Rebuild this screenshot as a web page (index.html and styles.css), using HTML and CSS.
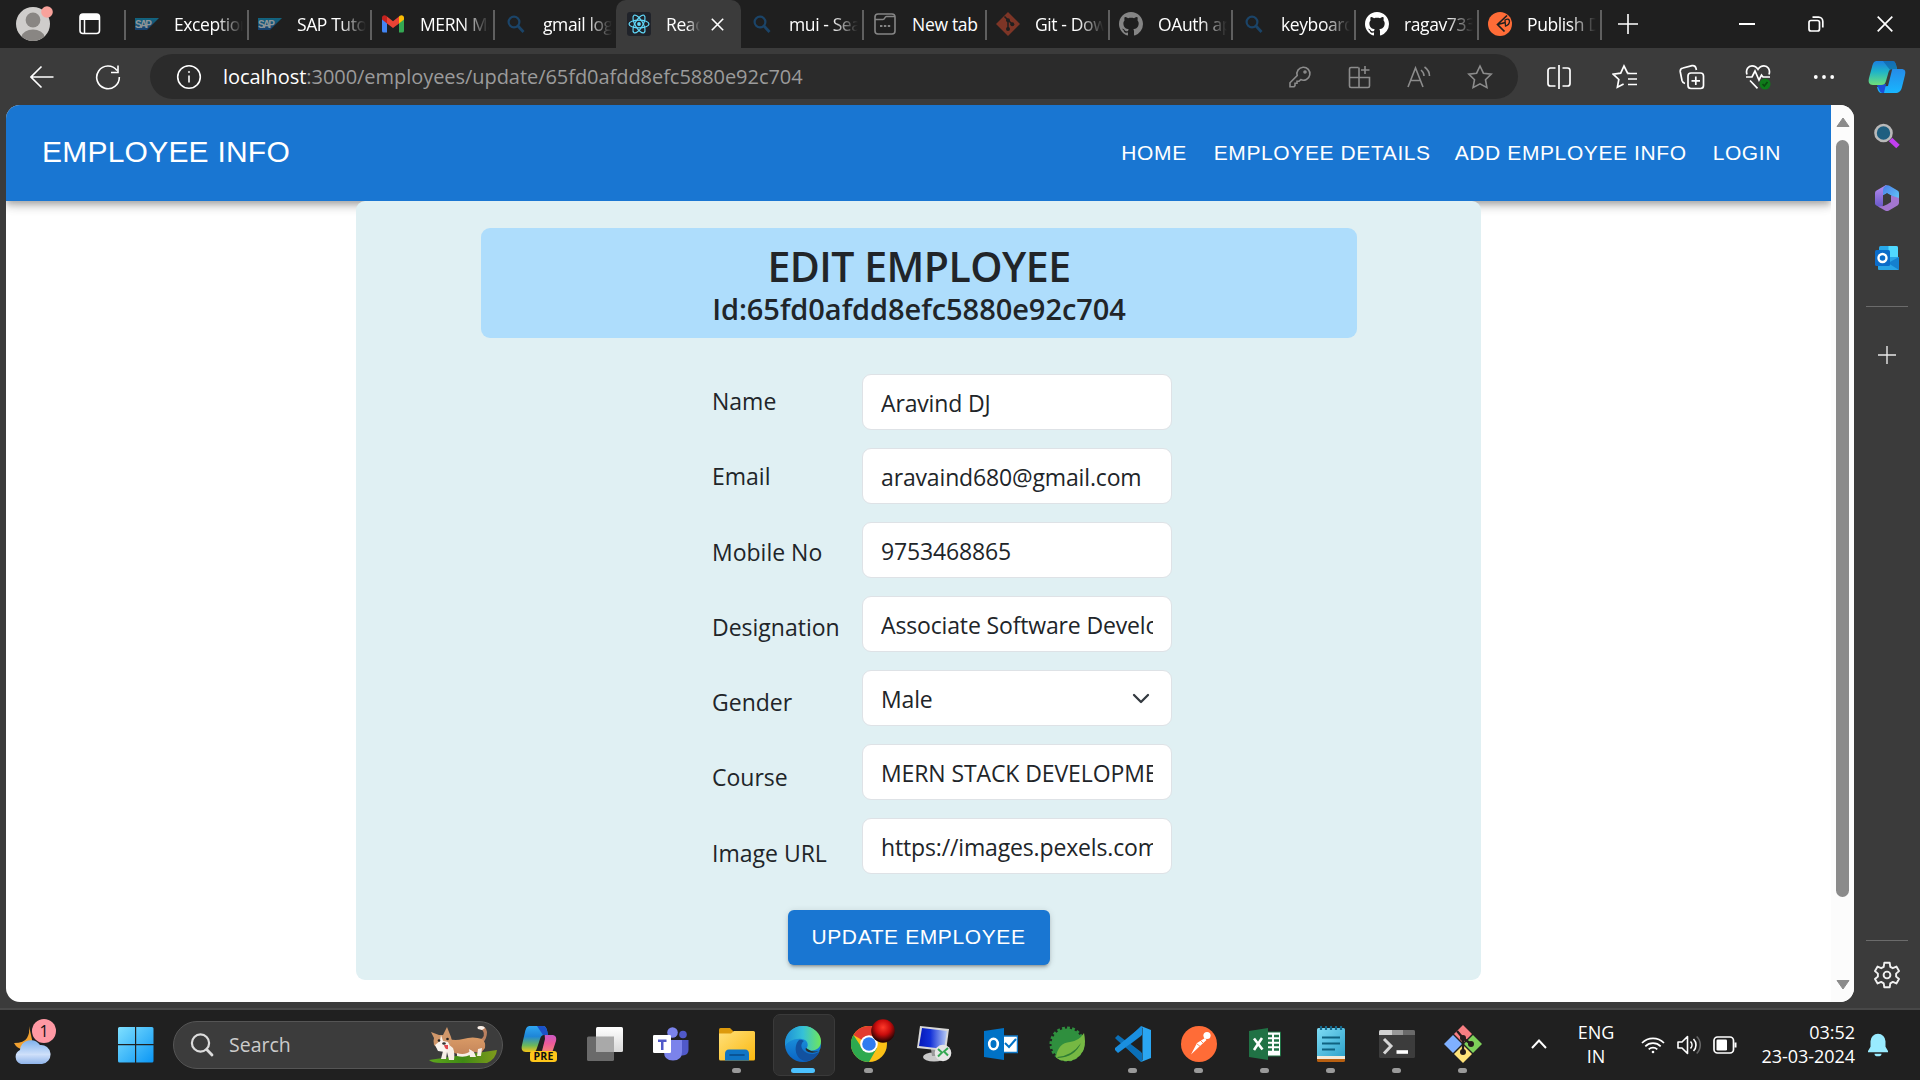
FILE: index.html
```html
<!DOCTYPE html>
<html lang="en">
<head>
<meta charset="utf-8">
<title>Employee Info</title>
<link rel="stylesheet" href="styles.css">
</head>
<body>
<svg class="defs" width="0" height="0" aria-hidden="true">
  <defs>
    <linearGradient id="gWin" x1="0" y1="0" x2="1" y2="1"><stop offset="0" stop-color="#7fe0ff"/><stop offset="1" stop-color="#0a96f5"/></linearGradient>
    <linearGradient id="gSap" x1="0" y1="0" x2="0" y2="1"><stop offset="0" stop-color="#12657f"/><stop offset="1" stop-color="#173f6e"/></linearGradient>
    <linearGradient id="gCopA" x1="0" y1="0" x2="0" y2="1"><stop offset="0" stop-color="#1b7fe0"/><stop offset=".45" stop-color="#1fb4c8"/><stop offset="1" stop-color="#6fe07a"/></linearGradient>
    <linearGradient id="gCopB" x1="0" y1="0" x2="0" y2="1"><stop offset="0" stop-color="#2a7de0"/><stop offset="1" stop-color="#18b6ff"/></linearGradient>
    <linearGradient id="gPreA" x1="0" y1="0" x2="0" y2="1"><stop offset="0" stop-color="#2fa6f2"/><stop offset=".4" stop-color="#1e86d8"/><stop offset=".75" stop-color="#6cb85a"/><stop offset="1" stop-color="#f7c515"/></linearGradient>
    <linearGradient id="gPreB" x1="0" y1="0" x2="0" y2="1"><stop offset="0" stop-color="#a358f0"/><stop offset=".6" stop-color="#ee5a9a"/><stop offset="1" stop-color="#f8946a"/></linearGradient>
    <linearGradient id="gCloud" x1="0" y1="0" x2="0" y2="1"><stop offset="0" stop-color="#7fb2ee"/><stop offset=".6" stop-color="#cfe0fa"/><stop offset="1" stop-color="#8fb4ea"/></linearGradient>
    <linearGradient id="gFold" x1="0" y1="0" x2="1" y2="1"><stop offset="0" stop-color="#ffe07a"/><stop offset="1" stop-color="#fbb80f"/></linearGradient>
    <linearGradient id="gEdgeA" x1="0" y1="0" x2="1" y2="0"><stop offset="0" stop-color="#1d8fd6"/><stop offset=".5" stop-color="#35c1d8"/><stop offset="1" stop-color="#6fe65a"/></linearGradient>
    <linearGradient id="gEdgeB" x1="0" y1="0" x2="0" y2="1"><stop offset="0" stop-color="#22a4e4"/><stop offset="1" stop-color="#0a63c4"/></linearGradient>
    <linearGradient id="gView" x1="0" y1="0" x2="0" y2="1"><stop offset="0" stop-color="#ffffff"/><stop offset="1" stop-color="#d8d8d8"/></linearGradient>
    <linearGradient id="gNote" x1="0" y1="0" x2="1" y2="1"><stop offset="0" stop-color="#7edcf5"/><stop offset="1" stop-color="#2fa3cb"/></linearGradient>
    <linearGradient id="gRdp" x1="0" y1="0" x2="1" y2="0"><stop offset="0" stop-color="#0518b8"/><stop offset=".4" stop-color="#1230d8"/><stop offset="1" stop-color="#b8ccf4"/></linearGradient>
    <linearGradient id="gM1" x1="0" y1="0" x2="1" y2="1"><stop offset="0" stop-color="#4a7fe8"/><stop offset="1" stop-color="#62c8f8"/></linearGradient>
    <linearGradient id="gM2" x1="0" y1="0" x2="0" y2="1"><stop offset="0" stop-color="#b78cf0"/><stop offset="1" stop-color="#6858c8"/></linearGradient>
    <radialGradient id="gBall" cx=".5" cy=".35" r=".7"><stop offset="0" stop-color="#ff3a2a"/><stop offset=".45" stop-color="#c80c0c"/><stop offset=".85" stop-color="#2a0404"/></radialGradient>
    <linearGradient id="gGrass" x1="0" y1="0" x2="1" y2="0"><stop offset="0" stop-color="#5fa81e"/><stop offset=".5" stop-color="#3f8a14"/><stop offset="1" stop-color="#7f9a1c"/></linearGradient>
    <linearGradient id="gDog" x1="0" y1="0" x2="0" y2="1"><stop offset="0" stop-color="#d99a66"/><stop offset="1" stop-color="#c4855a"/></linearGradient>
    <symbol id="sap" viewBox="0 0 24 12"><path d="M0 0h24L12 12H0z" fill="url(#gSap)"/><text x="0" y="9.6" class="sap-text" textLength="17">SAP</text></symbol>
    <symbol id="lens" viewBox="0 0 24 24"><g fill="none" stroke="#1b4468" stroke-width="2.2"><circle cx="10" cy="10" r="5.4"/><path d="M14 14l5.5 6" stroke-width="2.8"/></g></symbol>
    <symbol id="github" viewBox="0 0 16 16"><path fill="currentColor" d="M8 0C3.58 0 0 3.58 0 8c0 3.54 2.29 6.53 5.47 7.59.4.07.55-.17.55-.38 0-.19-.01-.82-.01-1.49-2.01.37-2.53-.49-2.69-.94-.09-.23-.48-.94-.82-1.13-.28-.15-.68-.52-.01-.53.63-.01 1.08.58 1.23.82.72 1.21 1.87.87 2.33.66.07-.52.28-.87.51-1.07-1.78-.2-3.64-.89-3.64-3.95 0-.87.31-1.59.82-2.15-.08-.2-.36-1.02.08-2.12 0 0 .67-.21 2.2.82.64-.18 1.32-.27 2-.27s1.36.09 2 .27c1.53-1.04 2.2-.82 2.2-.82.44 1.1.16 1.92.08 2.12.51.56.82 1.27.82 2.15 0 3.07-1.87 3.75-3.65 3.95.29.25.54.73.54 1.48 0 1.07-.01 1.93-.01 2.2 0 .21.15.46.55.38A8.01 8.01 0 0 0 16 8c0-4.42-3.58-8-8-8z"/></symbol>
  </defs>
</svg>

<header class="tabstrip">
  <div class="strip-start">
    <svg class="avatar" width="38" height="44" viewBox="0 0 38 44"><circle cx="18" cy="24" r="17" fill="#cfcdcb"/><circle cx="18" cy="20" r="7.4" fill="#898683"/><path d="M6.5 36.5a11.6 8 0 0 1 23 0A17 17 0 0 1 6.500 36.500z" fill="#898683"/><circle cx="32" cy="12" r="5.8" fill="#f8a29b"/></svg>
    <svg width="24" height="24" viewBox="0 0 24 24"><rect x="2" y="2" width="19.500" height="19.500" rx="3" fill="none" stroke="#fff" stroke-width="1.600"/><path d="M2 5a3 3 0 0 1 3-3h13.500a3 3 0 0 1 3 3v3H2z" fill="#fff"/><path d="M6.500 8v13" stroke="#fff" stroke-width="1.500"/></svg>
  </div>
  <div class="tab"><svg class="fav" width="24" height="12"><use href="#sap"/></svg><span class="tab-title">Exceptional</span></div>
  <div class="tab"><svg class="fav" width="24" height="12"><use href="#sap"/></svg><span class="tab-title">SAP Tutorial</span></div>
  <div class="tab"><svg class="fav" width="24" height="18" viewBox="0 0 24 18"><path d="M1 2.500V16a1.600 1.600 0 0 0 1.600 1.600H6V8z" fill="#4285f4"/><path d="M23 2.500V16a1.600 1.600 0 0 1-1.600 1.600H18V8z" fill="#34a853"/><path d="M18 1.600V8.500l5-4V2.600C23 .3 20.400-.6 18.800.8z" fill="#fbbc04"/><path d="M6 8.500V1.500l6 4.700 6-4.700v7L12 13z" fill="#ea4335"/><path d="M1 2.600V4.500l5 4V1.500L5.200.8C3.600-.6 1 .3 1 2.600z" fill="#c5221f"/></svg><span class="tab-title">MERN Mail</span></div>
  <div class="tab"><svg class="fav" width="24" height="24"><use href="#lens"/></svg><span class="tab-title">gmail login</span></div>
  <div class="tab active"><svg class="fav" width="24" height="24" viewBox="0 0 24 24"><rect width="24" height="24" rx="3" fill="#20232a"/><g fill="none" stroke="#61dafb" stroke-width="1.200"><ellipse cx="12" cy="12" rx="10" ry="3.900"/><ellipse cx="12" cy="12" rx="10" ry="3.900" transform="rotate(60 12 12)"/><ellipse cx="12" cy="12" rx="10" ry="3.900" transform="rotate(120 12 12)"/></g><circle cx="12" cy="12" r="1.900" fill="#61dafb"/></svg><span class="tab-title">React App</span><svg class="tab-close" width="13" height="13" viewBox="0 0 13 13"><path d="M.8.8l11.400 11.400M12.200.8L.8 12.200" stroke="#fff" stroke-width="1.600"/></svg></div>
  <div class="tab bare"><svg class="fav" width="24" height="24"><use href="#lens"/></svg><span class="tab-title">mui - Search</span></div>
  <div class="tab"><svg class="fav" width="24" height="24" viewBox="0 0 24 24" fill="none" stroke="#858585" stroke-width="1.600"><rect x="2" y="2" width="20" height="20" rx="3"/><path d="M2 7.500h8c2 0 1.500-3 3.500-3H22"/><path d="M7 14h2.400M10.900 14h2.400M14.800 14h2.400" stroke-width="2.200"/></svg><span class="tab-title whole">New tab</span></div>
  <div class="tab"><svg class="fav" width="24" height="24" viewBox="0 0 24 24"><path d="M12 0L24 12 12 24 0 12z" fill="#7d3526"/><path d="M8.500 4.500L12 8v9M12 8l4.300 4.300" stroke="#1f1f1f" stroke-width="1.500" fill="none"/><g fill="#1f1f1f"><circle cx="12" cy="8.200" r="2"/><circle cx="12" cy="17" r="2"/><circle cx="16.300" cy="12.300" r="2"/></g></svg><span class="tab-title">Git - Downloads</span></div>
  <div class="tab dim"><svg class="fav" width="24" height="24"><use href="#github"/></svg><span class="tab-title">OAuth apps</span></div>
  <div class="tab"><svg class="fav" width="24" height="24"><use href="#lens"/></svg><span class="tab-title">keyboards</span></div>
  <div class="tab"><svg class="fav" width="24" height="24"><use href="#github"/></svg><span class="tab-title">ragav7338</span></div>
  <div class="tab"><svg class="fav" width="24" height="24" viewBox="0 0 24 24"><circle cx="12" cy="12" r="12" fill="#ff6c37"/><path d="M19 3.500L9.500 12.500l7 7M9.500 12.500l8-2" stroke="#1f1f1f" stroke-width="1.700" fill="none"/><path d="M17 8q4-2 4.500 1 0 4-4 5z" fill="#ff6c37" stroke="#1f1f1f" stroke-width="1.300"/></svg><span class="tab-title">Publish Docs</span></div>
  <div class="newtab"><svg width="22" height="22" viewBox="0 0 22 22"><path d="M11 1v20M1 11h20" stroke="#fff" stroke-width="1.600"/></svg></div>
  <div class="winctl">
    <svg width="16" height="16" viewBox="0 0 16 16"><path d="M0 8h16" stroke="#fff" stroke-width="2"/></svg>
    <svg width="16" height="16" viewBox="0 0 16 16" fill="none" stroke="#fff" stroke-width="1.700"><rect x="1" y="4.500" width="10.500" height="10.500" rx="2"/><path d="M4.500 1.200h6a4.300 4.300 0 0 1 4.300 4.300v6"/></svg>
    <svg width="16" height="16" viewBox="0 0 16 16"><path d="M.7.7l14.600 14.600M15.300.7L.7 15.300" stroke="#fff" stroke-width="1.700"/></svg>
  </div>
</header>

<div class="toolbar">
  <svg class="tb-back" width="24" height="24" viewBox="0 0 24 24" fill="none" stroke="#fff" stroke-width="1.600"><path d="M23.500 12H1M11.500 1.500L1 12l10.500 10.500"/></svg>
  <svg class="tb-reload" width="26" height="26" viewBox="0 0 26 26" fill="none" stroke="#fff" stroke-width="1.600"><path d="M22 6.500A11.300 11.300 0 1 0 24.300 13M23 1.500v7h-7"/></svg>
  <div class="omnibox">
    <svg class="ob-info" width="26" height="26" viewBox="0 0 26 26" fill="none" stroke="#fff" stroke-width="1.600"><circle cx="13" cy="13" r="11.300"/><path d="M13 11.500v7"/><circle cx="13" cy="8" r=".7" fill="#fff" stroke-width=".6"/></svg>
    <span class="url"><b>localhost</b>:3000/employees/update/65fd0afdd8efc5880e92c704</span>
    <div class="ob-icons">
      <svg width="24" height="24" viewBox="0 0 24 24"><path d="M15 2.200a6.500 6.500 0 1 1-2.300 12.400L11 16.300H9v2H7v2.300l-1 1.200H2v-4l7.200-7.200A6.500 6.500 0 0 1 15 2.200z"/><circle cx="17" cy="7" r="1"/></svg>
      <svg width="24" height="24" viewBox="0 0 24 24"><path d="M11.500 2.500H4a1.500 1.500 0 0 0-1.500 1.500v17A1.500 1.500 0 0 0 4 22.500h17a1.500 1.500 0 0 0 1.500-1.500v-8.500h-20M12 2.500v20M18 1v8M14 5h8.500"/></svg>
      <svg width="26" height="24" viewBox="0 0 26 24"><path d="M2 22L9.500 3 17 22M4.500 15.500h10M15 5q3 2.500 3 6M18.500 2q5 3.500 5 9"/></svg>
      <svg width="26" height="26" viewBox="0 0 26 26"><path d="M13 2l3.400 7.200 7.800 1-5.700 5.500 1.400 7.900L13 19.800l-6.900 3.800 1.400-7.900L1.800 10.200l7.800-1z"/></svg>
    </div>
  </div>
  <div class="tb-icons">
    <svg width="26" height="26" viewBox="0 0 26 26"><path d="M9.500 4H4.500A2.500 2.500 0 0 0 2 6.500v13A2.500 2.500 0 0 0 4.500 22h5M16.500 4h5A2.500 2.500 0 0 1 24 6.500v13a2.500 2.500 0 0 1-2.500 2.500h-5M13 1v24"/></svg>
    <svg width="26" height="26" viewBox="0 0 26 26"><path d="M18 9.500L15.500 9 12 2 8.700 9.200 1.200 10.200l5.600 5.300-1.400 7.700 6.200-3.300M15 9.500h10M16 15h9M16 20.500h9"/></svg>
    <svg width="26" height="26" viewBox="0 0 26 26"><rect x="9" y="9" width="15.500" height="15.500" rx="3"/><path d="M16.800 12.500v8.500M12.500 16.800H21M6 19.500a4 4 0 0 1-3-3L1.300 8A3.500 3.500 0 0 1 4 4l9-2.300a3.500 3.500 0 0 1 4 2.500l.4 1.800"/></svg>
    <svg width="26" height="26" viewBox="0 0 26 26"><path d="M2 10.500C.3 5.500 3.500 1.800 7 1.800c2.600 0 4.600 1.200 6 3.600 1.400-2.400 3.400-3.600 6-3.600 3.500 0 6.700 3.700 5 8.700M1 13h6l3-6 4 9 2.500-5 1.500 2h7M5 16.500l7.500 7.800"/><circle cx="20" cy="20" r="5.500" fill="#0f7b1a" stroke="none"/><path d="M17.500 20l1.800 2 3.200-4" stroke="#0a4a10"/></svg>
    <svg width="26" height="26" viewBox="0 0 26 26"><g fill="#fff" stroke="none"><circle cx="4.800" cy="13" r="1.900"/><circle cx="13" cy="13" r="1.900"/><circle cx="21.200" cy="13" r="1.900"/></g></svg>
  </div>
  <svg class="tb-copilot" width="38" height="34" viewBox="0 0 38 34"><path d="M26 1l3 8h4c4 0 5 2 4 6l-3 12c-1 4-3 6-7 6H14c-3 0-4-2-5-6l11-1 4-16z" fill="url(#gCopB)"/><path d="M9 25l9-1-2 9c-3 .5-4-1-5-4z" fill="#1c4fd6"/><path d="M9 1h15c3 0 4 2 5 8h-4c-3 0-4 1-5 5l-2 7c-1 3-2 4-5 4H5c-4 0-5-3-4-7L4 7c1-4 2-6 5-6z" fill="url(#gCopA)"/><path d="M15 1h9c3 0 4 2 5 8h-4l-3 1z" fill="#0d5f9d" opacity=".6"/></svg>
</div>

<div class="workspace">
  <div class="viewport">
    <div class="page">
      <nav class="appbar">
        <span class="brand">EMPLOYEE INFO</span>
        <div class="links"><a>HOME</a><a>EMPLOYEE DETAILS</a><a>ADD EMPLOYEE INFO</a><a>LOGIN</a></div>
      </nav>
      <main class="card">
        <div class="banner"><h1>EDIT EMPLOYEE</h1><h2>Id:65fd0afdd8efc5880e92c704</h2></div>
        <form class="form">
          <div class="labels"><label>Name</label><label>Email</label><label>Mobile No</label><label>Designation</label><label>Gender</label><label>Course</label><label>Image URL</label></div>
          <div class="fields">
            <div class="field"><span>Aravind DJ</span></div>
            <div class="field"><span>aravaind680@gmail.com</span></div>
            <div class="field"><span>9753468865</span></div>
            <div class="field"><span>Associate Software Developer</span></div>
            <div class="field select"><span>Male</span><svg width="18" height="11" viewBox="0 0 18 11"><path d="M2 2l7 7 7-7" fill="none" stroke="#343a40" stroke-width="2.300" stroke-linecap="round" stroke-linejoin="round"/></svg></div>
            <div class="field caps"><span>MERN STACK DEVELOPMENT</span></div>
            <div class="field"><span>https://images.pexels.com/photos</span></div>
          </div>
        </form>
        <button class="submit">UPDATE EMPLOYEE</button>
      </main>
    </div>
    <div class="scrollbar">
      <svg width="14" height="11" viewBox="0 0 14 11"><path d="M7 1l6 8.500H1z" fill="#8b8b8b" stroke="#8b8b8b" stroke-linejoin="round"/></svg>
      <div class="thumb"></div>
      <svg class="down" width="14" height="11" viewBox="0 0 14 11"><path d="M7 10L1 1.500h12z" fill="#8b8b8b" stroke="#8b8b8b" stroke-linejoin="round"/></svg>
    </div>
  </div>
  <aside class="sidebar">
    <svg width="26" height="26" viewBox="0 0 26 26"><path d="M16.500 16.500l7.500 7" stroke="#c23ff0" stroke-width="5"/><circle cx="9.500" cy="10" r="8" fill="#1f5f80" stroke="#b9b9b9" stroke-width="2.600"/></svg>
    <svg width="26" height="28" viewBox="0 0 26 28"><path d="M12 1L2.500 6.500Q1 7.400 1 9v10.500q0 1.200 1 1.800l3 1.700q4 1 4-3V11l9-5z" fill="url(#gM2)"/><path d="M11 2q2-1.500 4-.4L23.500 6.500Q25 7.400 25 9v7l-8-4.500-4-2.300-4 2.300V6q0-2.500 2-4z" fill="url(#gM1)"/><path d="M25 14v5q0 1.500-1.500 2.400L15 26.500q-2 1.100-4 0L4 22.500q5 .5 9-2l4-2.500v-6.500z" fill="#a376d0"/><path d="M13 9.200l4 2.300v5L13 19l-4-2.500v-5z" fill="#3b3b3b"/></svg>
    <svg width="26" height="26" viewBox="0 0 26 26"><rect x="5" y="1" width="19" height="17" rx="1.500" fill="#28a8ea"/><path d="M14.500 1H22q2 0 2 2v9h-9.500z" fill="#50d9ff"/><path d="M4 13l21-1v12q0 1-1 1H5q-1 0-1-1z" fill="#28a4e6"/><path d="M25 12v13L14 18z" fill="#1480cf"/><rect x="1" y="5" width="15" height="16" rx="1.500" fill="#0b6cc9"/><circle cx="8.500" cy="13" r="4" fill="none" stroke="#fff" stroke-width="2.400"/></svg>
    <hr>
    <svg class="add" width="20" height="20" viewBox="0 0 20 20"><path d="M10 1v18M1 10h18" stroke="#e8e8e8" stroke-width="1.400"/></svg>
    <hr class="low">
    <svg class="gear" width="26" height="28" viewBox="0 0 26 28" fill="none" stroke="#f0f0f0" stroke-width="1.900" stroke-linejoin="round"><path d="M10.300 1.800h5.400l.6 4 2.500 1.400 3.600-1.600 2.600 4.500-2.900 2.500v2.900l2.900 2.400-2.600 4.500-3.600-1.500-2.500 1.400-.6 4h-5.400l-.6-4-2.500-1.400-3.600 1.500L1 17.900l2.900-2.400v-2.900L1 10.100l2.600-4.500 3.600 1.600 2.500-1.400z"/><circle cx="13" cy="14" r="3.400"/></svg>
  </aside>
</div>

<footer class="taskbar">
  <div class="weather">
    <svg width="38" height="46" viewBox="0 0 38 46"><path d="M16 4q1 7-2 12t-13 5q3 6 9 6t10-5z" fill="#f0a030"/><path d="M8 42a7.500 7.500 0 0 1-1-14 11 11 0 0 1 20-5 9.500 9.500 0 0 1 2 19z" fill="url(#gCloud)"/></svg>
    <span class="badge">1</span>
  </div>
  <svg class="start" width="36" height="36" viewBox="0 0 36 36"><path d="M0 1.500Q0 0 1.500 0H17v17H0zM18.200 0h15.800Q35.500 0 35.500 1.500V17H18.200zM0 18.200h17V35.500H1.500Q0 35.500 0 34zM18.200 18.200h17.300V34q0 1.500-1.500 1.500H18.200z" fill="url(#gWin)"/></svg>
  <div class="search">
    <svg width="24" height="24" viewBox="0 0 24 24" fill="none" stroke="#dcdcdc"><circle cx="10.500" cy="10" r="8.600" stroke-width="2.200"/><path d="M16.700 16.500l5.300 5.500" stroke-width="2.800" stroke-linecap="round"/></svg>
    <span>Search</span>
    <svg class="dog" width="70" height="40" viewBox="0 0 70 40"><path d="M0 35L68 25q-1 9-10 13H12Q3 38 0 35z" fill="url(#gGrass)"/><path d="M51 15q6-4 3-9-2-3-5-2-1-3 3-3 5 0 6 6 0 6-4 11z" fill="#bb8060"/><path d="M49 4q-2-3 3-3 3 0 4 2l-3 2z" fill="#f8f0ea"/><path d="M20 14q6 2 14 0 10-3 19 0 4 3 3 9l-4 5-7-1q-8 4-17 2l-9-4z" fill="url(#gDog)"/><path d="M14 21q6-3 10 2 2 5 1 12h-5l-2-8-1 7h-5l2-8zM28 28q8 3 15-3l-2 5q-6 3-13 1zM40 24l5 3 2 5h-6zM49 24l4-1-1 8h-4z" fill="#f6eee6"/><path d="M2 7l8 3h4l4-8 4 10q2 5-2 10l-8 4-7-6q-1-4 0-7z" fill="#d0976a"/><path d="M12 10l2 6 5 1 2 4-5 6-7-1-3-6 5-4z" fill="#fbf5ef"/><path d="M15 20h4v4q-3 1-4-4z" fill="#e0484e"/><circle cx="10" cy="15.500" r="1.300" fill="#222"/><circle cx="18.500" cy="14" r="1.300" fill="#222"/><ellipse cx="15" cy="18.500" rx="1.800" ry="1.300" fill="#333"/></svg>
  </div>
  <div class="apps">
    <div class="app"><svg width="38" height="38" viewBox="0 0 38 38"><path d="M24 1l2 9h6c3 0 5 2 4 6l-3 9c-1 4-3 5-6 5H14l8-4 3-12z" fill="url(#gPreB)"/><path d="M10 1h13c3 0 4 3 5 9h-4c-2 0-3 1-4 4l-3 9c-1 3-2 4-5 4H6c-4 0-5-3-4-7L5 7c1-4 2-6 5-6z" fill="url(#gPreA)"/><path d="M17 1h6c3 0 4 3 5 9h-5z" fill="#1b52c8"/></svg><span class="pre">PRE</span></div>
    <div class="app"><svg width="36" height="36" viewBox="0 0 36 36"><rect x="0" y="10.500" width="27" height="24.500" rx="1.500" fill="#6a6a6a"/><rect x="9" y="1" width="27" height="25" rx="1.500" fill="url(#gView)"/><path d="M9 10.500h18V26H9z" fill="#a9a9a9"/></svg></div>
    <div class="app"><svg width="36" height="34" viewBox="0 0 36 34"><circle cx="30" cy="7.500" r="3.800" fill="#5059c9"/><circle cx="19.500" cy="5.500" r="5.300" fill="#7b83eb"/><path d="M24 13h11.500v10q0 5-6 5.500h-4z" fill="#5059c9"/><path d="M11 13h18v12q0 8.500-9 8.500T11 25z" fill="#7b83eb"/><rect x="0" y="8" width="18" height="18" rx="1.300" fill="#fff"/><path d="M5 12.500h8.500v2.400h-3V23H8v-8.100H5z" fill="#5059c9"/></svg></div>
    <div class="app run"><svg width="36" height="34" viewBox="0 0 36 34"><path d="M0 2.500Q0 1 1.500 1H11l4 4v4H0z" fill="#dd9a0c"/><path d="M0 6.500h12l3-2.500h19.500Q36 4 36 5.500V32q0 1.500-1.500 1.500h-33Q0 33.500 0 32z" fill="url(#gFold)"/><path d="M6 33.500V27q0-4.500 4-4.500h16q4 0 4 4.500v6.500z" fill="#0f75c5"/><path d="M11 28h14" stroke="#084a86" stroke-width="1.600" stroke-linecap="round"/></svg></div>
    <div class="app run current"><svg width="36" height="36" viewBox="0 0 36 36"><circle cx="18" cy="18" r="18" fill="url(#gEdgeB)"/><path d="M0 16C1 6 9 0 18 0c11 0 18 8 18 15 0 6-4 9.500-9 9.500-4 0-6-1.500-5-3 1.500-2 1-8-5-8.500C10 12 3 15 0 20z" fill="url(#gEdgeA)"/><path d="M14 14c-6 6-4 20 7 21 6 0 11-4 13-9-5 3-12 3-16-2-2.500-3-2-7 1-9-2-1.500-4-1.500-5-1z" fill="#12519f"/><path d="M21 22c-2 3 5 7 13 3l2.500-3V24q-8 4-15.500-2z" fill="#2b2b2b"/></svg></div>
    <div class="app run"><svg width="36" height="36" viewBox="0 0 36 36"><circle cx="18" cy="18" r="18" fill="#fbc016"/><path d="M18 18L2.400 9A18 18 0 0 1 33.600 9z" fill="#e33b2e"/><path d="M2.400 9A18 18 0 0 0 18 36l8-14-15 0z" fill="#2da94f"/><circle cx="18" cy="18" r="8.800" fill="#fff"/><circle cx="18" cy="18" r="6.800" fill="#2f7cf0"/></svg><svg class="ball" width="24" height="24"><circle cx="12" cy="12" r="11.800" fill="url(#gBall)"/></svg></div>
    <div class="app"><svg width="36" height="36" viewBox="0 0 36 36"><ellipse cx="17" cy="31" rx="11" ry="4.500" fill="#c9c9c9"/><path d="M14 23h9l1 7h-9z" fill="#999"/><path d="M3 0l29 3-3 22L0 22z" fill="#d8d8d8"/><path d="M5 2l25 3-3 18L2 20z" fill="url(#gRdp)"/><circle cx="26" cy="27" r="8.300" fill="#e6e6e6"/><path d="M21 23l4 3.500-4 4M31 22l-4 3.500 4 4" stroke="#35a853" stroke-width="2" fill="none"/></svg></div>
    <div class="app"><svg width="34" height="32" viewBox="0 0 34 32"><path d="M18 8h15.500v16.500H18z" fill="#fff" stroke="#0f78c8" stroke-width="1.500"/><path d="M21 15l4 4 7-8" fill="none" stroke="#0072c6" stroke-width="2"/><path d="M0 3L20 0v32L0 29z" fill="#0072c6"/><ellipse cx="9.500" cy="16" rx="4.300" ry="5.200" fill="none" stroke="#fff" stroke-width="2.600"/></svg></div>
    <div class="app"><svg width="38" height="38" viewBox="0 0 38 38"><circle cx="19" cy="19" r="15.500" fill="#2f8f3e"/><circle cx="19" cy="19" r="16" fill="none" stroke="#2f8f3e" stroke-width="3" stroke-dasharray="2.800 2.200"/><path d="M36 8q3 14-3 21-6 8-16 7-7-1-9-4 2-14 14-15 9-1 14-9z" fill="#76b843"/><path d="M9 32q15-1 24-14-6 14-23 15z" fill="#2f7d34"/></svg></div>
    <div class="app run"><svg width="36" height="36" viewBox="0 0 36 36"><path d="M26 0v36L8 18z" fill="#0f86d2"/><path d="M0 12l3-3L27 27v9L2 14z" fill="#0a6fb8"/><path d="M0 24l3 3L27 9V0L0 22z" fill="#1a8fe0"/><path d="M26 0l10 4v28l-10 4 1.500-2V2z" fill="#2aa6f2"/><path d="M26 10v16L15.500 18z" fill="#202020"/></svg></div>
    <div class="app run"><svg width="36" height="36" viewBox="0 0 36 36"><circle cx="18" cy="18" r="18" fill="#ff6c37"/><circle cx="26" cy="9.500" r="3.600" fill="#fff"/><path d="M16 17l8-5 1.500 2L19 20l-9 8.500z" fill="#fff"/><path d="M16 18l4 3M19 14l4 4" stroke="#ff6c37" stroke-width=".8"/></svg></div>
    <div class="app run"><svg width="32" height="32" viewBox="0 0 32 32"><path d="M17 4h14.500v24H17z" fill="#fff" stroke="#207245"/><path d="M19 8h4M25 8h5M19 12.500h4M25 12.500h5M19 17h4M25 17h5M19 21.500h4M25 21.500h5" stroke="#207245" stroke-width="2.400"/><path d="M0 3l19-3v32L0 29z" fill="#207245"/><path d="M5 10.500l8.500 11M13 10L5 22" stroke="#fff" stroke-width="2.600"/></svg></div>
    <div class="app run"><svg width="28" height="36" viewBox="0 0 28 36"><rect y="28" width="28" height="8" rx="1.500" fill="#b85f10"/><rect y="27" width="28" height="6" fill="#f2ead9"/><path d="M0 3.500Q0 2 1.500 2h25Q28 2 28 3.500V30H0z" fill="url(#gNote)"/><path d="M5 11.500h18M5 17.500h18M5 23.500h13" stroke="#0f6280" stroke-width="2.200"/><path d="M4 0v4M9 0v4M14 0v4M19 0v4M24 0v4" stroke="#15698c" stroke-width="2.200"/></svg></div>
    <div class="app run"><svg width="36" height="28" viewBox="0 0 36 28"><rect width="36" height="28" rx="1.500" fill="#3c3c3c"/><path d="M0 1.500Q0 0 1.500 0H13v5H0z" fill="#d0d0d0"/><path d="M13 0h11v5H13z" fill="#989898"/><path d="M24 0h10.500Q36 0 36 1.500V5H24z" fill="#6a6a6a"/><path d="M5 9l7 7-7 7.500" fill="none" stroke="#d6d6d6" stroke-width="3"/><path d="M17.500 22h11.500" stroke="#fff" stroke-width="3.600"/></svg></div>
    <div class="app run"><svg width="38" height="38" viewBox="0 0 38 38"><path d="M19 0l9 9-9 9-9-9z" fill="#f77e82"/><path d="M9 10l9 9-9 9-9-9z" fill="#7fb0ff"/><path d="M29 10l9 9-9 9-9-9z" fill="#7ed05a"/><path d="M19 20l9 9-9 9-9-9z" fill="#ffe37a"/><path d="M13 6l6 7v15M19 13l8 6" stroke="#241c1c" stroke-width="2.300" fill="none"/><g fill="#241c1c"><circle cx="19" cy="13" r="3"/><circle cx="19" cy="27" r="3"/><circle cx="27" cy="19" r="3"/></g></svg></div>
  </div>
  <div class="tray">
    <svg class="chev" width="16" height="10" viewBox="0 0 16 10"><path d="M1 9l7-7.500L15 9" fill="none" stroke="#fff" stroke-width="2"/></svg>
    <div class="lang"><span>ENG</span><span>IN</span></div>
    <svg class="wifi" width="24" height="18" viewBox="0 0 24 18" fill="none" stroke="#fff" stroke-width="1.700"><path d="M1 7a15.500 15.500 0 0 1 22 0M4.300 10.300a11 11 0 0 1 15.400 0M7.700 13.400a6.300 6.300 0 0 1 8.600 0"/><circle cx="12" cy="16" r="1.300" fill="#fff" stroke="none"/></svg>
    <svg class="vol" width="24" height="20" viewBox="0 0 24 20" fill="none" stroke="#fff" stroke-width="1.600"><path d="M1 7h4l5.500-5.500v17L5 13H1z" stroke-linejoin="round"/><path d="M13.500 6.500a5 5 0 0 1 0 7M16.500 4a8.500 8.500 0 0 1 0 12"/><path d="M19.700 1.500a12 12 0 0 1 0 17" stroke="#666"/></svg>
    <svg class="bat" width="24" height="18" viewBox="0 0 24 18"><rect x="1" y="1" width="19.500" height="16" rx="3.500" fill="none" stroke="#fff" stroke-width="1.700"/><rect x="3.500" y="3.500" width="10.500" height="11" rx="1.300" fill="#fff"/><path d="M22.500 6.500v5" stroke="#fff" stroke-width="2"/></svg>
    <div class="clock"><span>03:52</span><span>23-03-2024</span></div>
    <svg class="bell" width="22" height="24" viewBox="0 0 22 24"><path d="M11 .8a7.500 7.500 0 0 1 7.500 7.500v5.500L21 18v1.300H1V18l2.500-4.200V8.300A7.500 7.500 0 0 1 11 .8zM7.500 20.700h7a3.500 2.600 0 0 1-7 0z" fill="#99ebff"/></svg>
  </div>
</footer>
</body>
</html>
```
FILE: styles.css
```css
* { box-sizing: border-box; }
body { margin: 0; width: 1920px; height: 1080px; overflow: hidden; display: flex; flex-direction: column; background: #3b3b3b; font-family: "Open Sans", "Noto Sans", sans-serif; }
svg { display: block; flex: none; }
.defs { position: absolute; }
.sap-text { font: bold 10px "Liberation Sans", sans-serif; fill: #8f9599; }

/* tab strip */
.tabstrip { height: 48px; flex: none; display: flex; background: #1f1f1f; color: #fff; }
.strip-start { width: 124px; display: flex; align-items: center; padding-left: 15px; gap: 25px; }
.strip-start .avatar { margin-bottom: 4px; }
.tab { width: 123px; display: flex; align-items: center; position: relative; padding-left: 11px; }
.tab::before { content: ""; position: absolute; left: 0; top: 10px; width: 2px; height: 30px; background: #5f5f5f; }
.tab.active::before, .tab.bare::before { display: none; }
.fav { margin-right: 15px; }
.tab.dim .fav { color: #858585; }
.tab-title { width: 69px; overflow: hidden; white-space: nowrap; font-size: 17.5px; line-height: 24px; padding-bottom: 1px; letter-spacing: -0.4px; -webkit-mask-image: linear-gradient(90deg, #000 62%, transparent 100%); mask-image: linear-gradient(90deg, #000 62%, transparent 100%); }
.tab-title.whole { -webkit-mask-image: none; mask-image: none; letter-spacing: -0.3px; }
.tab.active { background: #3b3b3b; border-radius: 10px 10px 0 0; width: 125px; margin-right: -2px; }
.tab.active .tab-title { width: 34px; }
.tab-close { margin-left: 11px; }
.newtab { width: 56px; display: flex; align-items: center; padding-left: 17px; position: relative; }
.newtab::before { content: ""; position: absolute; left: 0; top: 10px; width: 2px; height: 30px; background: #5f5f5f; }
.winctl { margin-left: auto; display: flex; align-items: center; gap: 53px; padding-right: 27px; }

/* toolbar */
.toolbar { height: 57px; flex: none; display: flex; align-items: center; background: #3b3b3b; padding-left: 30px; }
.tb-reload { margin-left: 41px; }
.omnibox { width: 1368px; height: 45px; margin-left: 29px; border-radius: 23px; background: #2b2b2b; display: flex; align-items: center; padding-left: 26px; padding-right: 25px; }
.url { margin-left: 21px; font-size: 20px; letter-spacing: -0.05px; color: #9b9b9b; white-space: nowrap; }
.url b { font-weight: 400; color: #fff; }
.ob-icons { margin-left: auto; display: flex; align-items: center; gap: 35px; fill: none; stroke: #8c8c8c; stroke-width: 1.6; }
.tb-icons { margin-left: 28px; display: flex; gap: 40.300px; fill: none; stroke: #fff; stroke-width: 1.7; }
.tb-copilot { margin-left: 31px; }

/* workspace */
.workspace { flex: none; height: 903px; display: flex; }
.viewport { width: 1848px; height: 897px; margin-left: 6px; display: flex; background: #fff; border-radius: 14px; overflow: hidden; }
.page { width: 1825px; display: flex; flex-direction: column; align-items: center; }
.appbar { width: 100%; height: 96px; flex: none; background: #1976d2; color: #fff; font-family: "Liberation Sans", sans-serif; display: flex; align-items: center; justify-content: space-between; padding: 0 38px 1px 36px; box-shadow: 0 3px 6px -1px rgba(0,0,0,.2), 0 6px 8px rgba(0,0,0,.14), 0 1px 15px rgba(0,0,0,.12); }
.brand { font-size: 30px; letter-spacing: 0.225px; padding-bottom: 1px; }
.links { display: flex; gap: 2px; font-size: 21px; letter-spacing: 0.6px; }
.links a { padding: 9px 12px; }
.links a:nth-child(2) { padding: 9px 10px 9px 13px; }
.card { width: 1125px; height: 779px; flex: none; background: #e0f0f3; border-radius: 9px; display: flex; flex-direction: column; align-items: center; position: relative; padding: 27px 0 0 1px; color: #212529; }
.banner { width: 876px; height: 110px; flex: none; border-radius: 9px; background: #aeddfc; padding-top: 13px; text-align: center; }
.banner h1, .banner h2 { margin: 0; font-weight: 580; white-space: nowrap; }
.banner h1 { font-size: 41px; line-height: 50px; letter-spacing: -0.5px; }
.banner h2 { font-size: 29px; line-height: 36px; letter-spacing: -0.05px; }
.form { display: flex; flex: none; width: 460px; height: 500px; margin: 36px 0 0 46px; }
.labels { width: 150px; display: flex; flex-direction: column; font-size: 23px; letter-spacing: 0; padding-top: 9px; }
.labels label { height: 75.300px; flex: none; line-height: 36px; white-space: nowrap; }
.fields { width: 310px; display: flex; flex-direction: column; gap: 18px; }
.field { height: 56px; flex: none; border: 1px solid #dee2e6; border-radius: 9px; background: #fff; padding: 0 18px; display: flex; align-items: center; justify-content: space-between; font-size: 23px; letter-spacing: -0.15px; }
.field.caps { letter-spacing: -0.1px; }
.field.select { padding-right: 21px; }
.field span { overflow: hidden; white-space: nowrap; padding-top: 1px; }
.submit { width: 262px; height: 55px; flex: none; margin-top: 36px; border: 0; border-radius: 6px; background: #1976d2; color: #fff; font: 21px "Liberation Sans", sans-serif; letter-spacing: 0.6px; box-shadow: 0 4px 2px -3px rgba(0,0,0,.2), 0 3px 3px rgba(0,0,0,.14), 0 1px 7px rgba(0,0,0,.12); white-space: nowrap; padding: 0 1px 1px 0; }
.scrollbar { width: 23px; background: #fcfcfc; display: flex; flex-direction: column; align-items: center; padding: 12px 0; }
.thumb { width: 13px; height: 757px; margin-top: 12px; border-radius: 7px; background: #8b8b8b; }
.down { margin-top: auto; }

/* sidebar */
.sidebar { flex: 1; display: flex; flex-direction: column; align-items: center; padding-top: 18px; }
.sidebar svg { margin-bottom: 35px; }
.sidebar svg + svg { margin-bottom: 33px; }
.sidebar hr { width: 42px; height: 1px; border: 0; margin: 2px 0 38px; background: #6b6b6b; flex: none; }
.sidebar hr.low { margin: auto 0 20px; }
.sidebar .gear { margin-bottom: 19px; }

/* taskbar */
.taskbar { height: 72px; flex: none; border-top: 2px solid #484848; background: #202020; display: flex; align-items: center; color: #fff; }
.weather { width: 118px; padding-left: 13px; position: relative; }
.badge { position: absolute; left: 32px; top: -3px; width: 24px; height: 24px; border-radius: 50%; background: #ff99a4; color: #111; font-size: 16px; line-height: 24px; text-align: center; }
.search { width: 330px; height: 48px; margin-left: 19px; border-radius: 24px; background: #3c3c3c; border: 1px solid #555; display: flex; align-items: center; padding: 0 3px 0 16px; color: #ccc; font-size: 19.500px; }
.search span { margin: 0 0 2px 15px; }
.dog { margin-left: auto; }
.apps { display: flex; margin-left: 3px; }
.app { width: 66px; height: 70px; display: flex; align-items: center; justify-content: center; position: relative; padding-bottom: 2px; }
.app > svg { position: relative; }
.app.run::after { content: ""; position: absolute; left: 28px; top: 58px; width: 9px; height: 5px; border-radius: 3px; background: #9a9a9a; }
.app.current::before { content: ""; position: absolute; left: 3px; top: 4px; width: 60px; height: 60px; border-radius: 7px; background: #2d2d2d; border: 1px solid #3a3a3a; }
.app.current::after { left: 21px; width: 24px; background: #4cc2ff; }
.app .ball { position: absolute; left: 35px; top: 9px; }
.pre { position: absolute; left: 24px; top: 41px; width: 27px; height: 11px; border-radius: 3px; background: #ffc61a; color: #111; font: bold 10.500px/11px "Open Sans", sans-serif; text-align: center; letter-spacing: .2px; }
.tray { flex: 1; display: flex; align-items: center; font-size: 18px; }
.chev { margin-left: 35px; margin-bottom: 2px; }
.lang, .clock { display: flex; flex-direction: column; line-height: 24px; padding-bottom: 2px; }
.lang { width: 60px; margin-left: 19px; align-items: center; }
.wifi { margin-left: 15px; }
.vol { margin-left: 12px; }
.bat { margin-left: 12px; }
.clock { width: 118px; align-items: flex-end; letter-spacing: -0.05px; }
.bell { margin-left: 12px; }
```
